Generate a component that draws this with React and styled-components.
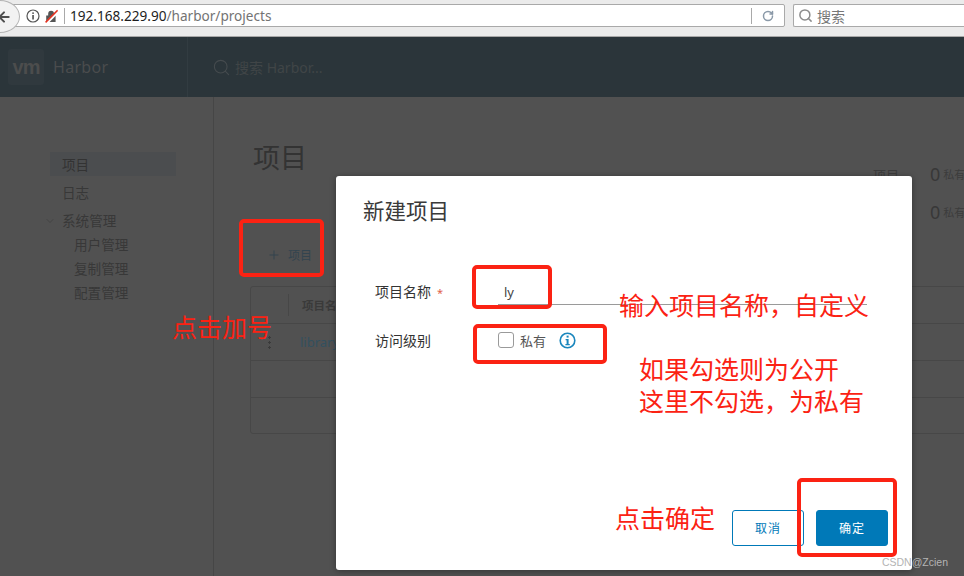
import React from "react";
import styled, { createGlobalStyle } from "styled-components";
import { ChevronDown, Plus, Search, RotateCw, ArrowLeft } from "lucide-react";

const FONT = `"Noto Sans", "Noto Sans CJK SC", sans-serif`;

const GlobalStyle = createGlobalStyle`
  html, body {
    margin: 0;
    padding: 0;
    width: 964px;
    height: 576px;
    overflow: hidden;
    font-family: ${FONT};
  }
`;

const Page = styled.div`
  position: relative;
  width: 964px;
  height: 576px;
  overflow: hidden;
  display: flex;
  flex-direction: column;
  background: #fff;
`;

const BrowserBar = styled.div`
  height: 32px;
  flex: none;
  display: flex;
  align-items: flex-start;
  gap: 8px;
  padding-top: 4px;
  background: #ebebeb;
  border-bottom: 1px solid #a8a8a8;
`;

const UrlBox = styled.div`
  position: relative;
  width: 800px;
  margin-left: -15px;
  height: 23px;
  box-sizing: border-box;
  background: #fff;
  border: 1px solid #a9a9a9;
  border-radius: 2px;
  display: flex;
  align-items: center;
  padding-left: 40px;
`;

const BackButton = styled.div`
  position: absolute;
  left: -6px;
  top: -5px;
  width: 40px;
  height: 33px;
  box-sizing: border-box;
  border-radius: 50%;
  background: #f2f2f2;
  border: 1px solid #b4b4b4;
  display: flex;
  align-items: center;
  justify-content: flex-end;
  padding-right: 7px;
  color: #4d4d4d;
`;

const SiteInfo = styled.svg`
  flex: none;
  width: 14px;
  height: 14px;
`;

const LockIcon = styled.svg`
  flex: none;
  width: 13px;
  height: 14px;
  margin-left: 5px;
`;

const BarDivider = styled.div`
  flex: none;
  width: 1px;
  height: 16px;
  background: #a9a9a9;
  margin: 0 ${(p) => p.$right}px 0 ${(p) => p.$left}px;
`;

const UrlHost = styled.span`
  font-size: 13.6px;
  color: #1d1d1d;
`;

const UrlPath = styled.span`
  font-size: 13.6px;
  color: #737373;
`;

const ReloadButton = styled.div`
  margin-left: auto;
  display: flex;
  align-items: center;
  color: #8a99a8;
  padding-right: 10px;
`;

const SearchBox = styled.div`
  flex: 1;
  height: 23px;
  box-sizing: border-box;
  background: #fff;
  border: 1px solid #a9a9a9;
  border-right: none;
  border-radius: 2px 0 0 2px;
  display: flex;
  align-items: center;
  gap: 4px;
  padding-left: 4px;
  font-size: 14px;
  color: #777;
`;

const Header = styled.div`
  height: 60px;
  flex: none;
  display: flex;
  align-items: center;
  background: #2b353a;
`;

const Brand = styled.div`
  width: 188px;
  height: 100%;
  box-sizing: border-box;
  display: flex;
  align-items: center;
  gap: 9px;
  padding-left: 8px;
  border-right: 1px solid #323c41;
`;

const LogoBox = styled.div`
  width: 36px;
  height: 36px;
  border-radius: 3px;
  background: #30393e;
  color: #4c4d4d;
  display: flex;
  align-items: center;
  justify-content: center;
  font: 700 20px "Liberation Sans", sans-serif;
  letter-spacing: -1px;
`;

const BrandName = styled.span`
  font-size: 16px;
  letter-spacing: 0.3px;
  color: #4a4c4d;
`;

const HeaderSearch = styled.div`
  display: flex;
  align-items: center;
  gap: 4px;
  margin-left: 24px;
  font-size: 14px;
  color: #404547;
`;

const Body = styled.div`
  flex: 1;
  display: flex;
  background: #515151;
`;

const Sidebar = styled.nav`
  width: 214px;
  flex: none;
  box-sizing: border-box;
  border-right: 1px solid #464646;
  padding: 55px 37px 0 50px;
  display: flex;
  flex-direction: column;
`;

const NavItem = styled.div`
  position: relative;
  height: 24px;
  margin-bottom: ${(p) => (p.$gap ? 4 : 0)}px;
  padding-left: ${(p) => (p.$child ? 24 : 12)}px;
  display: flex;
  align-items: center;
  font-size: 13.6px;
  color: ${(p) => (p.$active ? "#333" : "#383838")};
  background: ${(p) => (p.$active ? "#4b4d4f" : "transparent")};
`;

const NavChevron = styled(ChevronDown)`
  position: absolute;
  left: -6px;
  top: 7px;
  color: #444;
`;

const Main = styled.main`
  flex: 1;
  min-width: 0;
  padding: 43px 0 0 35px;
  position: relative;
`;

const PageTitle = styled.h1`
  margin: 0 0 0 4px;
  font-size: 27px;
  line-height: 36px;
  font-weight: 400;
  color: #333;
`;

const Stats = styled.div`
  position: absolute;
  left: 659px;
  top: 58px;
  display: grid;
  grid-template-columns: 57px auto auto;
  grid-auto-rows: 38px;
  align-items: center;
  white-space: nowrap;
  font-size: 13px;
  color: #3c3c3c;
`;

const StatNum = styled.span`
  font-size: 18px;
  color: #383838;
`;

const StatLabel = styled.span`
  font-size: 11px;
  margin-left: 3px;
  color: #3c3c3c;
`;

const AddButton = styled.div`
  display: flex;
  align-items: center;
  gap: 7px;
  margin: 67px 0 0 18px;
  height: 24px;
  font-size: 12px;
  color: #33444f;
`;

const Table = styled.div`
  width: 716px;
  margin: 19px 0 0 1px;
  box-sizing: border-box;
  border: 1px solid #474747;
  border-radius: 3px;
`;

const HeadRow = styled.div`
  height: 36px;
  display: flex;
  align-items: center;
  font-size: 11.5px;
  font-weight: 700;
  color: #3a3a3a;
  border-bottom: 1px solid #474747;
`;

const HeadCell = styled.div`
  margin-left: 37px;
  padding-left: 13px;
  height: 22px;
  display: flex;
  align-items: center;
  border-left: 1px solid #474747;
`;

const TableRow = styled.div`
  height: ${(p) => p.$h}px;
  box-sizing: border-box;
  display: flex;
  align-items: center;
  border-bottom: ${(p) => (p.$last ? "none" : "1px solid #474747")};
`;

const RowMenu = styled.span`
  margin-left: 17px;
  width: 3px;
  height: 14px;
  background: radial-gradient(circle, #3a3a3a 1px, transparent 1.3px) 0 0 / 3px 5px;
`;

const RowLink = styled.span`
  margin-left: 29px;
  font-size: 13px;
  color: #33505f;
`;

const Modal = styled.div`
  position: absolute;
  left: 336px;
  top: 176px;
  width: 576px;
  height: 394px;
  box-sizing: border-box;
  background: #fff;
  border-radius: 3px;
  box-shadow: 0 1px 6px rgba(0, 0, 0, 0.35);
  padding: 22px 24px 24px 27px;
  display: flex;
  flex-direction: column;
`;

const ModalTitle = styled.h3`
  margin: 0 0 48px 0;
  font-size: 21.5px;
  line-height: 26px;
  font-weight: 400;
  color: #3a3a3a;
`;

const FormRow = styled.div`
  display: flex;
  align-items: center;
  height: ${(p) => p.$h}px;
  margin-top: ${(p) => p.$top || 0}px;
  padding-left: 12px;
`;

const FieldLabel = styled.label`
  width: 123px;
  flex: none;
  font-size: 14px;
  color: #333;
`;

const Required = styled.span`
  color: #e0604a;
  margin-left: 6px;
  font-size: 11px;
`;

const NameInput = styled.div`
  align-self: flex-start;
  width: 369px;
  height: 33px;
  box-sizing: border-box;
  border-bottom: 1px solid #9a9a9a;
  padding: 11px 0 0 6px;
  font-size: 13px;
  line-height: 18px;
  color: #444;
`;

const CheckBox = styled.span`
  width: 16px;
  height: 16px;
  box-sizing: border-box;
  border: 1px solid #9a9a9a;
  border-radius: 3px;
  background: #fff;
`;

const CheckText = styled.span`
  margin-left: 6px;
  font-size: 13px;
  color: #555;
`;

const InfoIcon = styled.svg`
  flex: none;
  width: 17px;
  height: 17px;
  margin-left: 13px;
`;

const ModalFooter = styled.div`
  margin-top: auto;
  display: flex;
  justify-content: flex-end;
  gap: 12px;
`;

const Btn = styled.div`
  width: 72px;
  height: 36px;
  box-sizing: border-box;
  border-radius: 3px;
  border: 1px solid #0079b8;
  display: flex;
  align-items: center;
  justify-content: center;
  font-size: 12px;
  letter-spacing: 1px;
  color: ${(p) => (p.$primary ? "#fff" : "#0079b8")};
  background: ${(p) => (p.$primary ? "#0079b8" : "#fff")};
`;

const RedBox = styled.div`
  position: absolute;
  left: ${(p) => p.$x}px;
  top: ${(p) => p.$y}px;
  width: ${(p) => p.$w}px;
  height: ${(p) => p.$h}px;
  box-sizing: border-box;
  border: 4px solid #fb2213;
  border-radius: 5px;
`;

const RedNote = styled.div`
  position: absolute;
  left: ${(p) => p.$x}px;
  top: ${(p) => p.$y}px;
  font-size: 25px;
  line-height: 32px;
  color: #fb2213;
  white-space: nowrap;
  font-family: "Noto Sans CJK SC", sans-serif;
`;

const Watermark = styled.div`
  position: absolute;
  right: 16px;
  bottom: 8px;
  font-size: 10.5px;
  color: #b4b4b4;
  font-family: "Liberation Sans", sans-serif;
`;

export default function App() {
  return (
    <Page>
      <GlobalStyle />
      <BrowserBar>
        <UrlBox>
          <BackButton>
            <ArrowLeft size={16} strokeWidth={3} />
          </BackButton>
          <SiteInfo viewBox="0 0 14 14">
            <circle cx="7" cy="7" r="6" fill="none" stroke="#555" strokeWidth="1.2" />
            <rect x="6.3" y="6" width="1.5" height="4.5" fill="#444" />
            <rect x="6.3" y="3.4" width="1.5" height="1.5" fill="#444" />
          </SiteInfo>
          <LockIcon viewBox="0 0 13 14">
            <path d="M3.2 6.5V4.6a2.9 2.9 0 0 1 5.8 0V6.5h1.6V13H1.2V6.5z" fill="#555" />
            <path d="M1.6 14 13 2.6" stroke="#fff" strokeWidth="2.8" />
            <path d="M0.6 13.4 12.6 1.4" stroke="#e5311f" strokeWidth="1.5" />
          </LockIcon>
          <BarDivider $left={6} $right={5} />
          <UrlHost>192.168.229.90</UrlHost>
          <UrlPath>/harbor/projects</UrlPath>
          <ReloadButton>
            <BarDivider $left={0} $right={10} />
            <RotateCw size={12} strokeWidth={3} />
          </ReloadButton>
        </UrlBox>
        <SearchBox>
          <Search size={15} strokeWidth={2.4} color="#8c8c8c" />
          搜索
        </SearchBox>
      </BrowserBar>

      <Header>
        <Brand>
          <LogoBox>vm</LogoBox>
          <BrandName>Harbor</BrandName>
        </Brand>
        <HeaderSearch>
          <Search size={19} strokeWidth={1.4} color="#454b4e" />
          搜索 Harbor...
        </HeaderSearch>
      </Header>

      <Body>
        <Sidebar>
          <NavItem $active $gap>项目</NavItem>
          <NavItem $gap>日志</NavItem>
          <NavItem>
            <NavChevron size={12} />
            系统管理
          </NavItem>
          <NavItem $child>用户管理</NavItem>
          <NavItem $child>复制管理</NavItem>
          <NavItem $child>配置管理</NavItem>
        </Sidebar>
        <Main>
          <PageTitle>项目</PageTitle>
          <Stats>
            <span>项目</span>
            <StatNum>0</StatNum>
            <StatLabel>私有</StatLabel>
            <span />
            <StatNum>0</StatNum>
            <StatLabel>私有</StatLabel>
          </Stats>
          <AddButton>
            <Plus size={14} strokeWidth={1.6} />
            项目
          </AddButton>
          <Table>
            <HeadRow>
              <HeadCell>项目名称</HeadCell>
            </HeadRow>
            <TableRow $h={37}>
              <RowMenu />
              <RowLink>library</RowLink>
            </TableRow>
            <TableRow $h={37} />
            <TableRow $h={35} $last />
          </Table>
        </Main>
      </Body>

      <Modal>
        <ModalTitle>新建项目</ModalTitle>
        <FormRow $h={38}>
          <FieldLabel>
            项目名称<Required>*</Required>
          </FieldLabel>
          <NameInput>ly</NameInput>
        </FormRow>
        <FormRow $h={28} $top={16}>
          <FieldLabel>访问级别</FieldLabel>
          <CheckBox />
          <CheckText>私有</CheckText>
          <InfoIcon viewBox="0 0 17 17">
            <circle cx="8.5" cy="8.5" r="7.3" fill="none" stroke="#1a86bd" strokeWidth="1.6" />
            <rect x="7.6" y="3.6" width="2" height="2" fill="#1a86bd" />
            <path d="M6.6 7h3v5h1.2v1.2H6.4V12h1.2V8.2h-1z" fill="#1a86bd" />
          </InfoIcon>
        </FormRow>
        <ModalFooter>
          <Btn>取消</Btn>
          <Btn $primary>确定</Btn>
        </ModalFooter>
      </Modal>

      <RedBox $x={239} $y={219} $w={85} $h={58} />
      <RedBox $x={472} $y={265} $w={80} $h={44} />
      <RedBox $x={473} $y={324} $w={134} $h={40} />
      <RedBox $x={797} $y={478} $w={100} $h={79} />

      <RedNote $x={172} $y={310}>点击加号</RedNote>
      <RedNote $x={619} $y={288}>输入项目名称，自定义</RedNote>
      <RedNote $x={639} $y={352}>
        如果勾选则为公开
        <br />
        这里不勾选，为私有
      </RedNote>
      <RedNote $x={615} $y={501}>点击确定</RedNote>

      <Watermark>CSDN@Zcien</Watermark>
    </Page>
  );
}
